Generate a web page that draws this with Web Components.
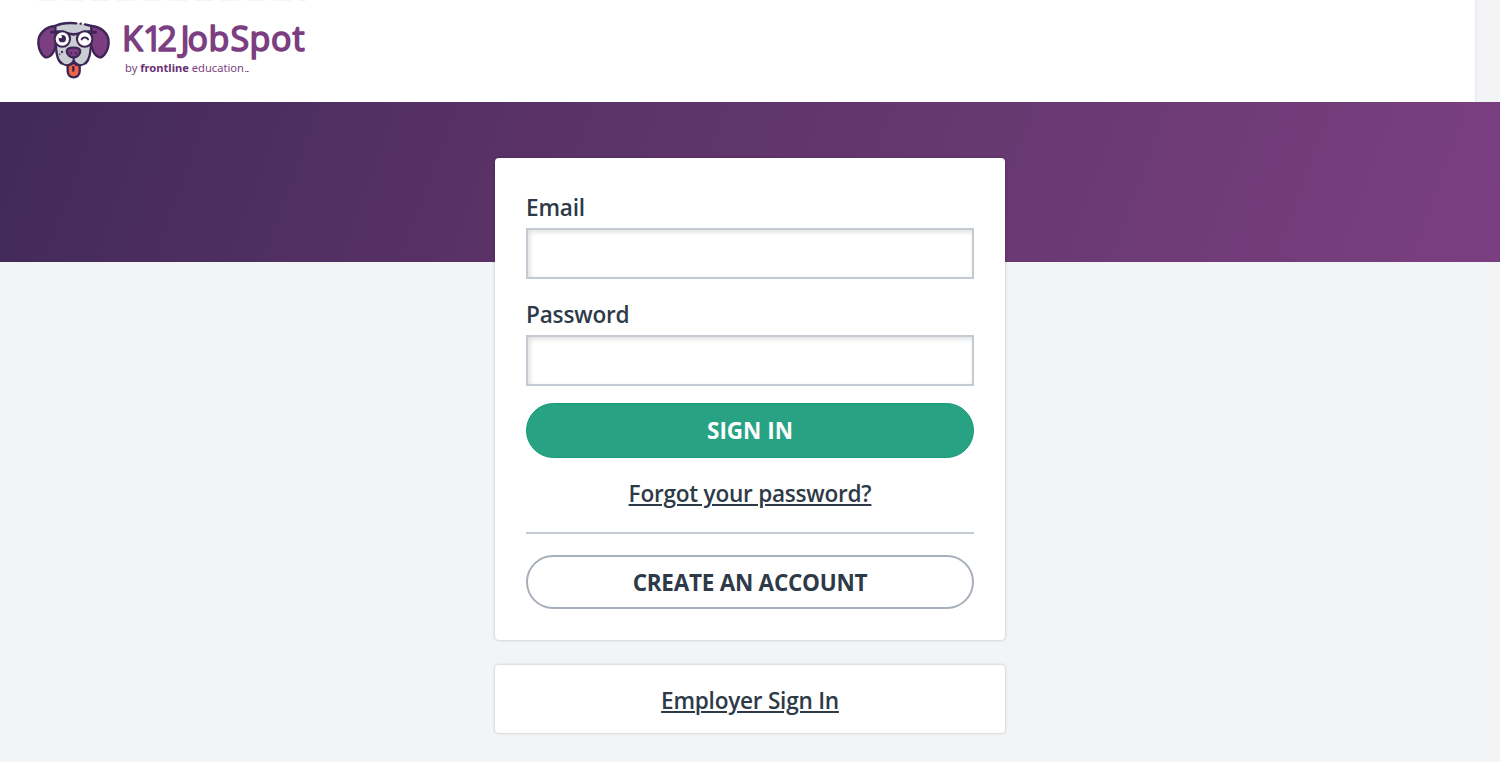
<!DOCTYPE html>
<html lang="en">
<head>
<meta charset="utf-8">
<title>K12JobSpot - Sign In</title>
<style>
  body {
    margin: 0;
    background: #f3f4f6;
    color: #2e3a47;
    font-family: "Open Sans", sans-serif;
  }
</style>
</head>
<body>
<signin-page></signin-page>

<script>
class SiteLogo extends HTMLElement {
  connectedCallback() {
    this.attachShadow({ mode: 'open' });
    this.shadowRoot.innerHTML = `
      <style>
        :host { display: flex; }
        svg { display: block; }
        .dog { width: 90px; height: 75px; }
        .wordmark { width: 200px; height: 75px; }
        .name {
          font-family: "Open Sans", sans-serif;
          font-weight: 500;
          font-size: 34px;
          fill: #7b3f81;
          stroke: #7b3f81;
          stroke-width: 1.6;
          stroke-linejoin: round;
        }
        .by { font-family: "Noto Sans", sans-serif; font-size: 11.3px; fill: #7b3f81; }
        .by .strong { font-weight: 700; fill: #6b2f76; }
      </style>
      <svg class="dog" viewBox="0 0 270 225" fill="none" stroke="#3d2556" stroke-width="7" stroke-linecap="round" stroke-linejoin="round">
        <path d="M80 48C102 38 151 37 180 46L190 72L184 121C180 137 175 149 167 160C158 170 143 169 131 154C117 169 103 169 94 158L79 123L72 73Z" fill="#c9ced3" stroke="none"/>
        <path d="M76 48C49 49 24 70 25 98C26 126 42 144 51 142C67 139 79 116 78 94C77 82 76 72 76 48Z" fill="#7b3f81"/>
        <path d="M184 48C211 49 237 70 236 98C235 126 217 144 209 142C194 138 182 116 183 94C184 82 184 72 184 48Z" fill="#7b3f81"/>
        <path d="M75 48C94 39 120 38 139 40M165 43L184 48"/>
        <circle cx="152" cy="41" r="3.5" fill="#3d2556" stroke="none"/>
        <path d="M78 94C77 128 84 152 94 160M183 94C183 128 177 151 167 160"/>
        <path d="M113 166V184C113 208 149 208 149 184V166C140 166 135 162 131 156C126 162 121 166 113 166Z" fill="#ef6543"/>
        <path d="M130 171V182"/>
        <path d="M131 141V151C124 168 104 170 94 158M131 151C140 168 157 170 167 158" stroke-width="6"/>
        <path d="M111 128C108 114 119 113 130 113C142 113 153 114 150 128C146 138 138 142 131 143C124 142 115 138 111 128Z" fill="#7b3f81"/>
        <path d="M124 129V130M138 129V130" stroke-width="6"/>
        <path d="M64 67C79 64 101 64 112 70C124 74 137 74 150 70C162 64 182 64 197 67" stroke-width="8"/>
        <path d="M113 73L120 83V87M149 73L141 83V87" stroke-width="6"/>
        <circle cx="97" cy="87" r="23" fill="#fff" stroke-width="6"/>
        <circle cx="164" cy="87" r="23" fill="#fff" stroke-width="6"/>
        <circle cx="97" cy="86" r="11" fill="#3d2556" stroke="none"/>
        <circle cx="91" cy="80" r="5" fill="#fff" stroke="none"/>
        <path d="M155 88C159 81 170 81 174 88" stroke-width="6"/>
        <g fill="#3d2556" stroke="none">
          <circle cx="96" cy="126" r="3.5"/>
          <circle cx="89" cy="133" r="2.5"/>
        </g>
      </svg>
      <svg class="wordmark" viewBox="120 10 200 75">
        <text class="name" y="50.5" x="122 143 157.5 180.5 187.5 208.5 230.5 249.5 271 292.5">K12JobSpot</text>
        <text class="by" x="125" y="72" textLength="119" lengthAdjust="spacingAndGlyphs">by <tspan class="strong">frontline</tspan> education</text>
        <path d="M245 71.5h1.4M247 71.5h1.6" stroke="#7b3f81" stroke-width="1"/>
      </svg>
    `;
  }
}
customElements.define('site-logo', SiteLogo);

class SiteHeader extends HTMLElement {
  connectedCallback() {
    this.attachShadow({ mode: 'open' });
    this.shadowRoot.innerHTML = `
      <style>
        :host {
          display: flex;
          box-sizing: border-box;
          height: 102px;
          margin-right: 25px;
          padding: 10px 0 0 30px;
          background: repeating-linear-gradient(90deg, #f4f4f4 0 18px, #fff 18px 26px) no-repeat 39px 0 / 267px 1px #fff;
          box-shadow: 1px 0 2px rgba(0, 0, 0, 0.06);
        }
      </style>
      <slot></slot>
    `;
  }
}
customElements.define('site-header', SiteHeader);

class PanelCard extends HTMLElement {
  connectedCallback() {
    this.attachShadow({ mode: 'open' });
    this.shadowRoot.innerHTML = `
      <style>
        :host {
          display: flex;
          flex-direction: column;
          box-sizing: border-box;
          width: 510px;
          background: #fff;
          border-radius: 4px;
          box-shadow: 0 0 3px rgba(0, 0, 0, 0.25);
        }
      </style>
      <slot></slot>
    `;
  }
}
customElements.define('panel-card', PanelCard);

class FormField extends HTMLElement {
  connectedCallback() {
    this.attachShadow({ mode: 'open' });
    this.shadowRoot.innerHTML = `
      <style>
        :host { display: block; }
        label {
          display: block;
          height: 40px;
          font-size: 22.6px;
          font-weight: 560;
          letter-spacing: -0.2px;
          line-height: 39px;
        }
        input {
          display: block;
          box-sizing: border-box;
          width: 100%;
          height: 51px;
          padding: 0 12px;
          border: 2px solid #c3cad2;
          border-radius: 0;
          outline: none;
          background: #fff;
          box-shadow: inset 2px 2px 5px rgba(0, 0, 0, 0.13);
          font: inherit;
          font-size: 22px;
        }
      </style>
      <label for="field">${this.getAttribute('label')}</label>
      <input id="field" type="${this.getAttribute('type')}">
    `;
  }
}
customElements.define('form-field', FormField);

class PillButton extends HTMLElement {
  connectedCallback() {
    this.attachShadow({ mode: 'open' });
    this.shadowRoot.innerHTML = `
      <style>
        :host { display: block; }
        button {
          display: block;
          box-sizing: border-box;
          width: 100%;
          height: 54px;
          padding: 0;
          border: 2px solid #a7afba;
          border-radius: 27px;
          background: #fff;
          color: inherit;
          font: inherit;
          font-size: 22.5px;
          font-weight: 700;
          letter-spacing: -0.25px;
          text-transform: uppercase;
          cursor: pointer;
        }
        :host([primary]) button {
          height: 55px;
          border: 1px solid #159a77;
          border-radius: 28px;
          background: #27a383;
          color: #fff;
          letter-spacing: 0;
        }
      </style>
      <button type="button"><slot></slot></button>
    `;
  }
}
customElements.define('pill-button', PillButton);

class TextLink extends HTMLElement {
  connectedCallback() {
    this.attachShadow({ mode: 'open' });
    this.shadowRoot.innerHTML = `
      <style>
        :host { display: block; text-align: center; }
        a {
          color: inherit;
          font-size: 22.6px;
          font-weight: 560;
          letter-spacing: -0.25px;
          line-height: 32px;
          text-decoration: underline;
          text-decoration-thickness: 2px;
          text-underline-offset: 2px;
        }
      </style>
      <a href="#"><slot></slot></a>
    `;
  }
}
customElements.define('text-link', TextLink);

class SigninPage extends HTMLElement {
  connectedCallback() {
    this.attachShadow({ mode: 'open' });
    this.shadowRoot.innerHTML = `
      <style>
        :host {
          display: block;
          height: 762px;
          overflow: hidden;
        }
        main {
          display: flex;
          flex-direction: column;
          align-items: center;
          gap: 25px;
          box-sizing: border-box;
          height: 660px;
          padding-top: 56px;
          background: linear-gradient(110deg, #412a58 0%, #5a3267 35%, #673971 65%, #7b3f81 100%) no-repeat 0 0 / 100% 160px;
        }
        .signin { height: 482px; padding: 30px 31px 0; }
        .password { margin-top: 16px; }
        .submit { margin-top: 17px; }
        .forgot { margin-top: 20px; }
        hr {
          width: 100%;
          height: 2px;
          margin: 22px 0 21px;
          border: 0;
          background: #c3cad2;
        }
        .employer { height: 68px; padding-top: 20px; }
      </style>
      <site-header><site-logo></site-logo></site-header>
      <main>
        <panel-card class="signin">
          <form-field label="Email" type="email"></form-field>
          <form-field class="password" label="Password" type="password"></form-field>
          <pill-button class="submit" primary>Sign In</pill-button>
          <text-link class="forgot">Forgot your password?</text-link>
          <hr>
          <pill-button>Create an Account</pill-button>
        </panel-card>
        <panel-card class="employer">
          <text-link>Employer Sign In</text-link>
        </panel-card>
      </main>
    `;
  }
}
customElements.define('signin-page', SigninPage);
</script>
</body>
</html>
